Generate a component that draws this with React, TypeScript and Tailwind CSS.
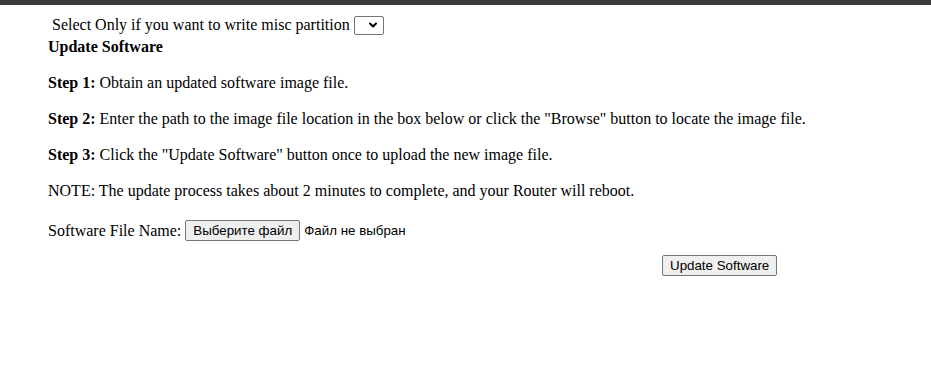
import { ChevronDown } from 'lucide-react';

export default function App() {
  return (
    <div className="min-h-[385px] w-[931px] bg-white text-black font-['Liberation_Serif',serif] text-[16px] leading-[18px]">
      <div className="h-[5px] bg-[#3a3a3a]" />
      <div className="pl-[48px]">
        <div className="mt-[11px] flex items-center h-[18px] pl-[4px]">
          <span>Select Only if you want to write misc partition</span>
          <span className="ml-[4px] w-[30px] h-[19px] border border-[#767676] rounded-[2px] flex items-center justify-end pr-[4px]">
            <ChevronDown className="w-[12px] h-[12px]" strokeWidth={4} />
          </span>
        </div>
        <div className="font-bold mt-[4px]">Update Software</div>
        <p className="mt-[18px]"><b>Step 1:</b> Obtain an updated software image file.</p>
        <p className="mt-[18px]"><b>Step 2:</b> Enter the path to the image file location in the box below or click the "Browse" button to locate the image file.</p>
        <p className="mt-[18px]"><b>Step 3:</b> Click the "Update Software" button once to upload the new image file.</p>
        <p className="mt-[18px]">NOTE: The update process takes about 2 minutes to complete, and your Router will reboot.</p>
        <div className="mt-[20px] flex items-center">
          <span>Software File Name:</span>
          <span className="ml-[4px] h-[21px] px-[7px] border border-[#767676] rounded-[2px] bg-[#efefef] flex items-center font-['Liberation_Sans',sans-serif] text-[13.33px]">Выберите файл</span>
          <span className="ml-[4px] font-['Liberation_Sans',sans-serif] text-[13.33px]">Файл не выбран</span>
        </div>
        <div className="mt-[14px] pl-[614px]">
          <button className="h-[21px] px-[7px] border border-[#767676] rounded-[2px] bg-[#efefef] font-['Liberation_Sans',sans-serif] text-[13.33px] leading-[15px]">Update Software</button>
        </div>
      </div>
    </div>
  );
}
